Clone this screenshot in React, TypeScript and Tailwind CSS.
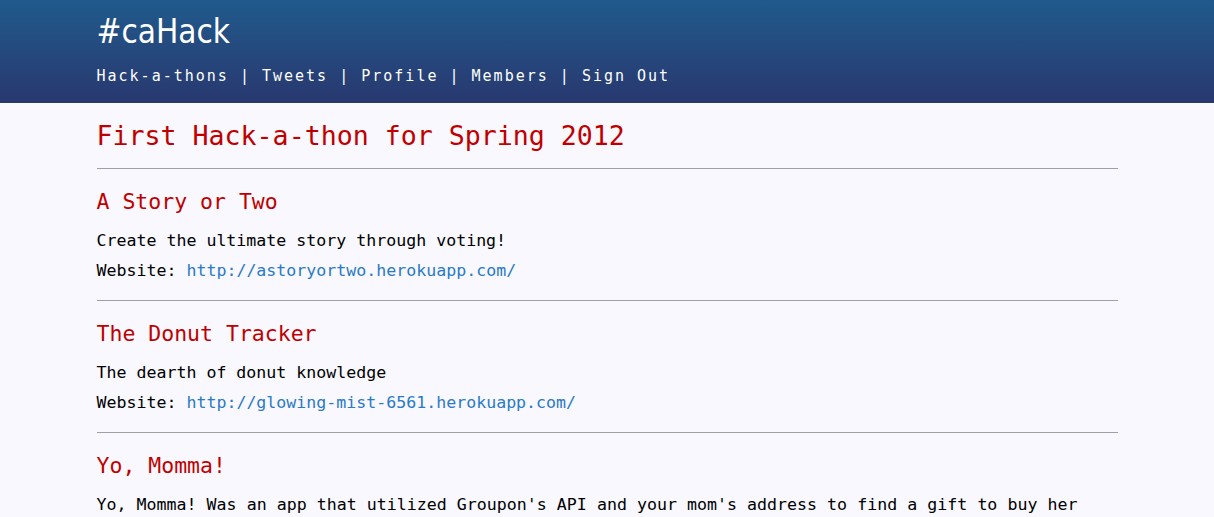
import React from 'react';

interface Hack {
  title: string;
  description: string;
  website?: string;
}

const hacks: Hack[] = [
  {
    title: 'A Story or Two',
    description: 'Create the ultimate story through voting!',
    website: 'http://astoryortwo.herokuapp.com/'
  },
  {
    title: 'The Donut Tracker',
    description: 'The dearth of donut knowledge',
    website: 'http://glowing-mist-6561.herokuapp.com/'
  },
  {
    title: 'Yo, Momma!',
    description:
      "Yo, Momma! Was an app that utilized Groupon's API and your mom's address to find a gift to buy her for Mother's Day, based on deals available near where she lives."
  }
];

const navLinks = ['Hack-a-thons', 'Tweets', 'Profile', 'Members', 'Sign Out'];

const mono = 'font-["DejaVu_Sans_Mono","Liberation_Mono",monospace]';

const App: React.FC = () => {
  return (
    <div className={`min-h-screen bg-[#f8f8fe] ${mono}`}>
      <header className="h-[103px] bg-gradient-to-b from-[#1f5a8c] to-[#27386f]">
        <div className="mx-auto w-[1021px] pt-[12px]">
          <h1 className='font-["DejaVu_Sans_Condensed","DejaVu_Sans",sans-serif] text-[33px] leading-[40px] text-white'>
            #caHack
          </h1>
          <nav className="mt-[14px] text-[15px] leading-[20px] tracking-[2px] text-white">
            {navLinks.map((link, i) => (
              <span key={link}>
                {i > 0 && <span> | </span>}
                <a href="#">{link}</a>
              </span>
            ))}
          </nav>
        </div>
      </header>

      <main className="mx-auto w-[1021px]">
        <h2 className="pt-[13px] text-[26.6px] leading-[40px] text-[#c00000]">
          First Hack-a-thon for Spring 2012
        </h2>
        {hacks.map(hack => (
          <section key={hack.title} className="pb-[2px]">
            <hr className="mt-[12px] border-t border-[#a0a0a0]" />
            <h3 className="mt-[18px] text-[21.5px] leading-[30px] text-[#c00000]">{hack.title}</h3>
            <div className="mt-[9px] pr-[40px] text-[16.6px] leading-[30px] text-black">
              <p className="text-justify">{hack.description}</p>
              {hack.website && (
                <p>
                  Website:{' '}
                  <a href="#" className="text-[#2a7ac6]">
                    {hack.website}
                  </a>
                </p>
              )}
            </div>
          </section>
        ))}
      </main>
    </div>
  );
};

export default App;
